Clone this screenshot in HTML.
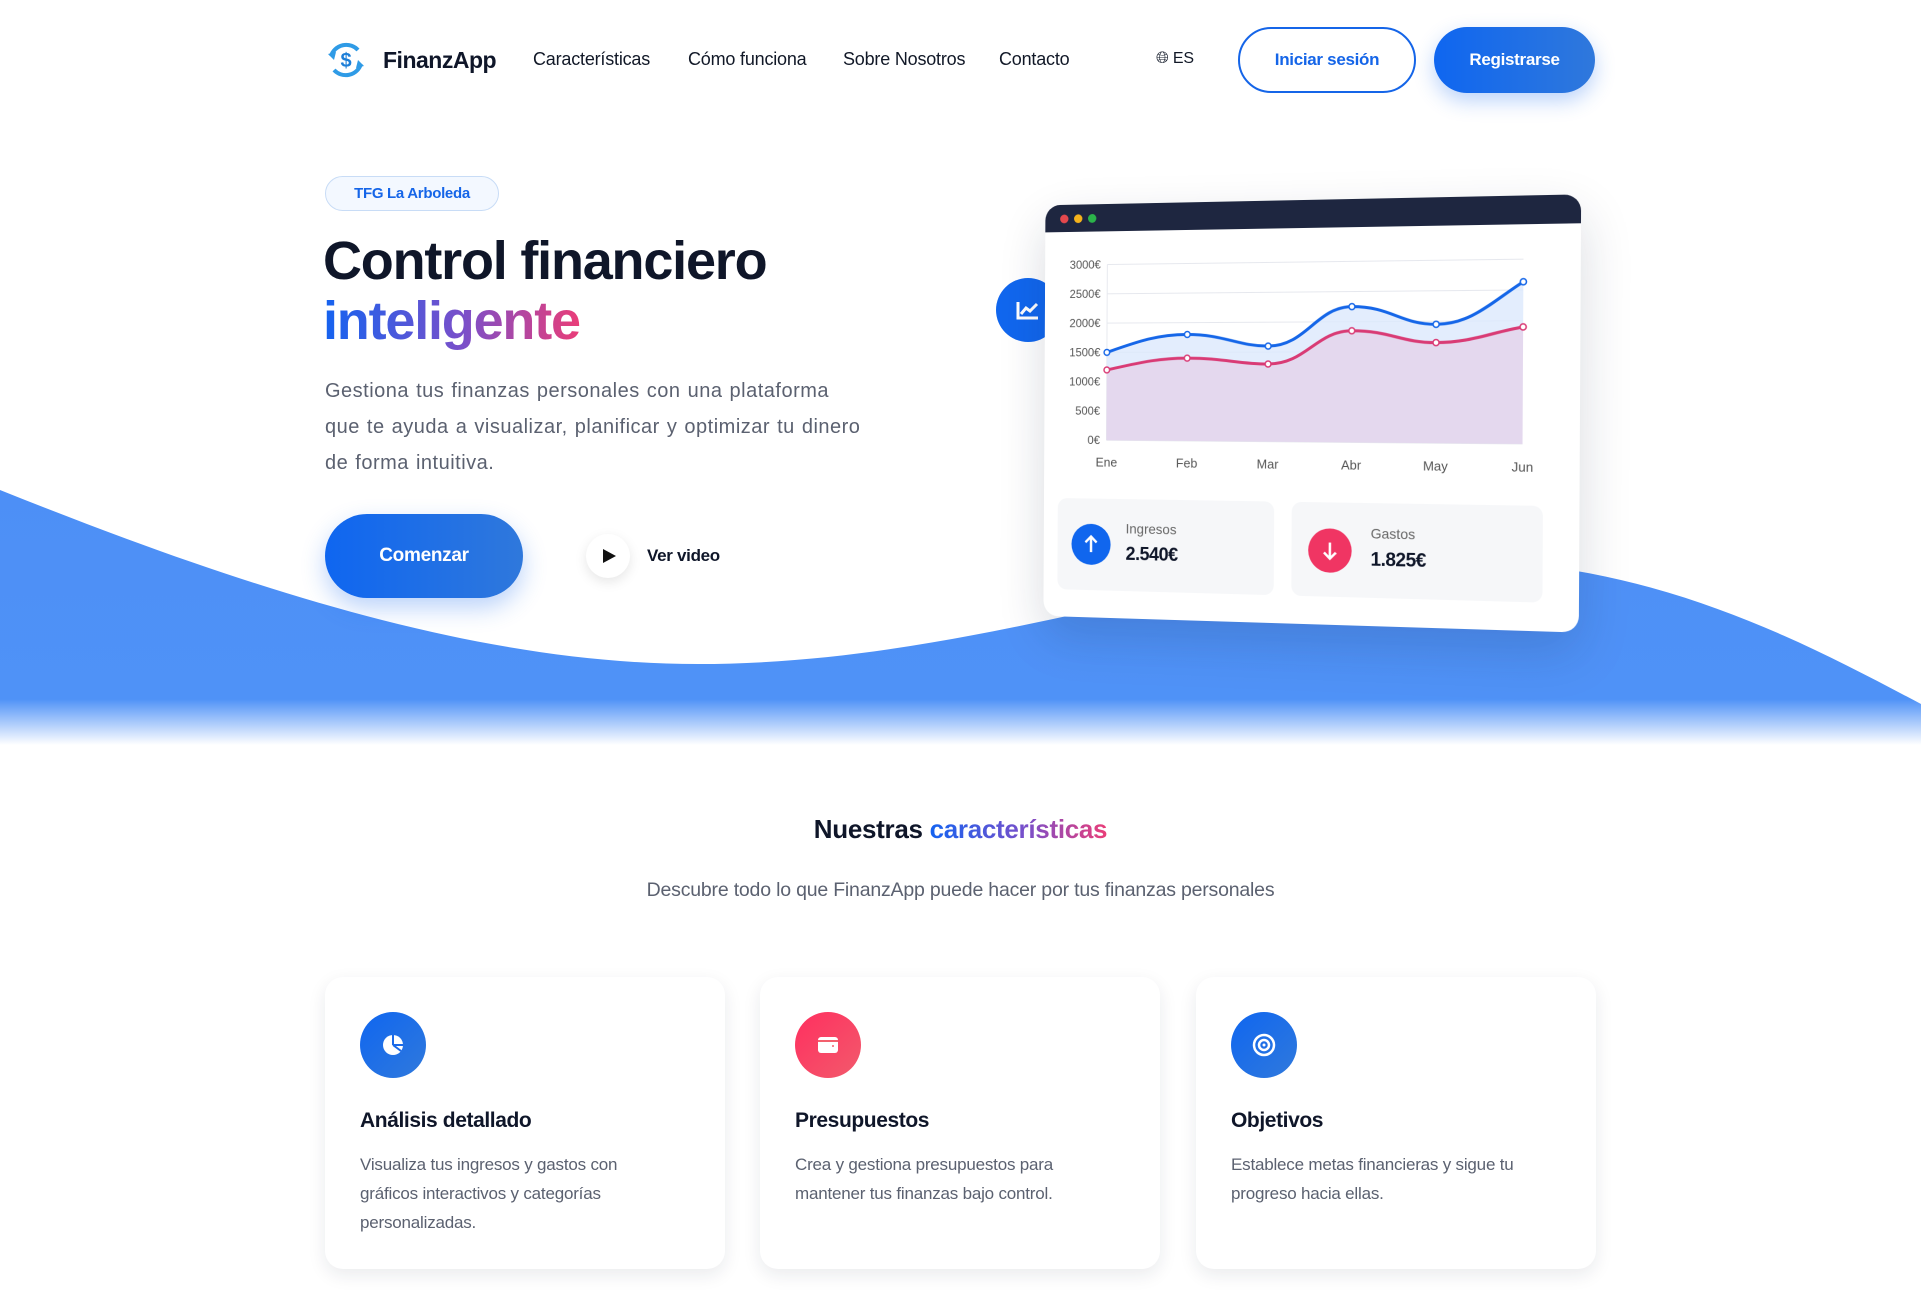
<!DOCTYPE html>
<html><head><meta charset="utf-8"><style>
*{margin:0;padding:0;box-sizing:border-box}
body{width:1921px;height:1294px;overflow:hidden;background:#fff;font-family:"Liberation Sans",sans-serif;color:#0f1629;position:relative}
.abs{position:absolute}
.nav a{position:absolute;top:49px;font-size:18px;color:#111827;text-decoration:none;letter-spacing:-0.2px}
.btn{position:absolute;border-radius:34px;display:flex;align-items:center;justify-content:center;font-weight:bold;font-size:17px;letter-spacing:-0.3px}
.grad{background:linear-gradient(90deg,#1463f0,#7b4fc9 55%,#ea3d78);-webkit-background-clip:text;background-clip:text;color:transparent}
.card{position:absolute;top:977px;width:400px;height:292px;background:#fff;border-radius:18px;box-shadow:0 6px 18px rgba(20,30,60,.09)}
.card .ic{position:absolute;left:35px;top:35px;width:66px;height:66px;border-radius:50%;display:flex;align-items:center;justify-content:center}
.card h3{position:absolute;left:35px;top:132px;font-size:21px;letter-spacing:-0.4px}
.card p{position:absolute;left:35px;top:173px;width:340px;font-size:17px;line-height:29px;color:#5b6170;letter-spacing:-0.2px;white-space:nowrap}
</style></head><body>

<svg class="abs" style="left:0;top:0" width="1921" height="760">
<defs><linearGradient id="wf" x1="0" y1="0" x2="0" y2="1"><stop offset="0" stop-color="#4d8ff6"/><stop offset="0.82" stop-color="#4f92f7"/><stop offset="1" stop-color="#fff"/></linearGradient></defs>
<path d="M0 490 C250 590 480 664 698 664 C980 664 1200 560 1450 560 C1650 560 1800 640 1921 704 L1921 745 L0 745 Z" fill="url(#wf)"/>
</svg>

<svg class="abs" style="left:326px;top:40px" width="40" height="40" viewBox="0 0 40 40">
<path d="M32 10 A16 16 0 0 0 5 16" fill="none" stroke="#2f9be6" stroke-width="4"/>
<path d="M8 30 A16 16 0 0 0 35 24" fill="none" stroke="#2f9be6" stroke-width="4"/>
<path d="M2 14 L8 20 L10 12Z" fill="#2f9be6"/><path d="M38 26 L32 20 L30 28Z" fill="#2f9be6"/>
<text x="20" y="27" text-anchor="middle" font-family="Liberation Sans" font-weight="bold" font-size="20" fill="#1d7fd8">$</text>
</svg>
<div class="abs" style="left:383px;top:47px;font-size:23px;font-weight:bold;letter-spacing:-0.5px">FinanzApp</div>
<div class="nav">
<a style="left:533px">Características</a>
<a style="left:688px">Cómo funciona</a>
<a style="left:843px">Sobre Nosotros</a>
<a style="left:999px">Contacto</a>
<a style="left:1156px;font-size:16px;top:50px">🌐︎ ES</a>
</div>
<div class="btn" style="left:1238px;top:27px;width:178px;height:66px;border:2px solid #1565e8;color:#1565e8">Iniciar sesión</div>
<div class="btn" style="left:1434px;top:27px;width:161px;height:66px;background:linear-gradient(90deg,#0f66f0,#2f78dc);color:#fff;box-shadow:0 8px 20px rgba(30,110,240,.3)">Registrarse</div>

<div class="abs" style="left:325px;top:176px;width:174px;height:35px;border:1px solid #c8dcf6;background:#f3f8ff;border-radius:18px;color:#1565e8;font-size:15px;font-weight:bold;display:flex;align-items:center;justify-content:center;letter-spacing:-0.3px">TFG La Arboleda</div>
<div class="abs" style="left:323px;top:231px;font-size:54px;font-weight:bold;letter-spacing:-1.2px;line-height:60px">Control financiero<br><span class="grad">inteligente</span></div>
<div class="abs" style="left:325px;top:373px;width:620px;font-size:20px;line-height:36px;color:#5b6170;letter-spacing:0.5px;word-spacing:1px;white-space:nowrap">Gestiona tus finanzas personales con una plataforma<br>que te ayuda a visualizar, planificar y optimizar tu dinero<br>de forma intuitiva.</div>
<div class="btn" style="left:325px;top:514px;width:198px;height:84px;border-radius:42px;background:linear-gradient(90deg,#0f66f0,#2f78dc);color:#fff;font-size:19px;box-shadow:0 10px 24px rgba(30,110,240,.3)">Comenzar</div>
<div class="abs" style="left:586px;top:534px;width:44px;height:44px;border-radius:50%;background:#fff;box-shadow:0 4px 12px rgba(0,0,0,.1)"><svg width="44" height="44"><path d="M17 15 L30 22 L17 29Z" fill="#111"/></svg></div>
<div class="abs" style="left:647px;top:546px;font-size:17px;font-weight:bold;letter-spacing:-0.3px">Ver video</div>

<div class="abs" style="left:996px;top:278px;width:64px;height:64px;border-radius:50%;background:#1066ee"><svg width="64" height="64"><path d="M22 24 V40 H42" fill="none" stroke="#fff" stroke-width="3"/><path d="M25 36 L30 30 L34 33 L41 26" fill="none" stroke="#fff" stroke-width="3"/></svg></div>

<div class="abs" style="left:1031px;top:200px;width:545px;height:424px;transform:perspective(1600px) rotateY(-11deg) rotateZ(0.3deg);transform-origin:50% 50%">
<div style="position:absolute;inset:0;background:#fff;border-radius:16px;box-shadow:0 20px 50px rgba(20,30,60,.16);overflow:hidden">
<div style="height:28px;background:#1e2640;display:flex;align-items:center;padding-left:16px;gap:6px">
<i style="width:9px;height:9px;border-radius:50%;background:#e5484d"></i><i style="width:9px;height:9px;border-radius:50%;background:#f5b31c"></i><i style="width:9px;height:9px;border-radius:50%;background:#2bb34a"></i></div>
<svg style="position:absolute;left:0;top:34px" width="545" height="260" font-family="Liberation Sans" font-size="12" fill="#555">
<g stroke="#e6e8ee" stroke-width="1">
<line x1="67" y1="28" x2="490" y2="28"/><line x1="67" y1="58" x2="490" y2="58"/><line x1="67" y1="88" x2="490" y2="88"/><line x1="67" y1="118" x2="490" y2="118"/><line x1="67" y1="148" x2="490" y2="148"/><line x1="67" y1="178" x2="490" y2="178"/><line x1="67" y1="208" x2="490" y2="208"/><line x1="67" y1="28" x2="67" y2="208"/></g>
<g text-anchor="end"><text x="60" y="32">3000€</text><text x="60" y="62">2500€</text><text x="60" y="92">2000€</text><text x="60" y="122">1500€</text><text x="60" y="152">1000€</text><text x="60" y="182">500€</text><text x="60" y="212">0€</text></g>
<g text-anchor="middle" font-size="13"><text x="67" y="235">Ene</text><text x="152" y="235">Feb</text><text x="236" y="235">Mar</text><text x="321" y="235">Abr</text><text x="405" y="235">May</text><text x="490" y="235">Jun</text></g>
<path d="M67 118 C100 107 120 100 152 100 C190 100 205 112 236 112 C275 112 285 73 321 73 C360 73 370 91 405 91 C440 91 460 69 490 50 L490 208 L67 208Z" fill="#dce9fc" opacity=".8"/>
<path d="M67 136 C100 129 120 124 152 124 C190 124 205 130 236 130 C275 130 285 97 321 97 C360 97 370 109 405 109 C440 109 460 99 490 94 L490 208 L67 208Z" fill="#e4d8ee"/>
<path d="M67 118 C100 107 120 100 152 100 C190 100 205 112 236 112 C275 112 285 73 321 73 C360 73 370 91 405 91 C440 91 460 69 490 50" fill="none" stroke="#1566e8" stroke-width="3"/>
<path d="M67 136 C100 129 120 124 152 124 C190 124 205 130 236 130 C275 130 285 97 321 97 C360 97 370 109 405 109 C440 109 460 99 490 94" fill="none" stroke="#d93b75" stroke-width="3"/>
<g fill="#fff" stroke="#1566e8" stroke-width="1.5"><circle cx="67" cy="118" r="3"/><circle cx="152" cy="100" r="3"/><circle cx="236" cy="112" r="3"/><circle cx="321" cy="73" r="3"/><circle cx="405" cy="91" r="3"/><circle cx="490" cy="50" r="3"/></g>
<g fill="#fff" stroke="#d93b75" stroke-width="1.5"><circle cx="67" cy="136" r="3"/><circle cx="152" cy="124" r="3"/><circle cx="236" cy="130" r="3"/><circle cx="321" cy="97" r="3"/><circle cx="405" cy="109" r="3"/><circle cx="490" cy="94" r="3"/></g>
</svg>
<div style="position:absolute;left:15px;top:302px;width:228px;height:94px;background:#f6f7f9;border-radius:10px">
<div style="position:absolute;left:15px;top:26px;width:42px;height:42px;border-radius:50%;background:#1066ee"><svg width="42" height="42"><path d="M21 29 V13 M15 19 L21 13 L27 19" stroke="#fff" stroke-width="2.5" fill="none"/></svg></div>
<div style="position:absolute;left:73px;top:22px;font-size:14px;color:#666">Ingresos</div>
<div style="position:absolute;left:73px;top:46px;font-size:19px;font-weight:bold;letter-spacing:-0.5px">2.540€</div></div>
<div style="position:absolute;left:261px;top:302px;width:249px;height:94px;background:#f6f7f9;border-radius:10px">
<div style="position:absolute;left:17px;top:26px;width:44px;height:44px;border-radius:50%;background:#f03563"><svg width="44" height="44"><path d="M22 14 V30 M16 24 L22 30 L28 24" stroke="#fff" stroke-width="2.5" fill="none"/></svg></div>
<div style="position:absolute;left:80px;top:22px;font-size:14px;color:#666">Gastos</div>
<div style="position:absolute;left:80px;top:46px;font-size:19px;font-weight:bold;letter-spacing:-0.5px">1.825€</div></div>
</div></div>

<div class="abs" style="left:0;width:1921px;top:814px;text-align:center;font-size:26px;font-weight:bold;letter-spacing:-0.3px">Nuestras <span class="grad">características</span></div>
<div class="abs" style="left:0;width:1921px;top:879px;text-align:center;font-size:19.5px;color:#5b6170;letter-spacing:-0.2px">Descubre todo lo que FinanzApp puede hacer por tus finanzas personales</div>

<div class="card" style="left:325px"><div class="ic" style="background:linear-gradient(135deg,#0f66f0,#3079dc)"><svg width="24" height="24"><circle cx="12" cy="12" r="10" fill="#fff"/><path d="M12 12 V2 M12 12 L20 18 M12 12 H22" stroke="#1a6ae9" stroke-width="2"/></svg></div><h3>Análisis detallado</h3><p>Visualiza tus ingresos y gastos con<br>gráficos interactivos y categorías<br>personalizadas.</p></div>
<div class="card" style="left:760px"><div class="ic" style="background:linear-gradient(135deg,#ff2f5f,#f25a6c)"><svg width="24" height="24"><rect x="2" y="4" width="20" height="16" rx="3" fill="#fff"/><rect x="2" y="7" width="20" height="2" fill="#f3606d"/><circle cx="17" cy="13" r="1" fill="#f3606d"/></svg></div><h3>Presupuestos</h3><p>Crea y gestiona presupuestos para<br>mantener tus finanzas bajo control.</p></div>
<div class="card" style="left:1196px"><div class="ic" style="background:linear-gradient(135deg,#0f66f0,#3079dc)"><svg width="26" height="26"><circle cx="13" cy="13" r="10" fill="none" stroke="#fff" stroke-width="2.5"/><circle cx="13" cy="13" r="5" fill="none" stroke="#fff" stroke-width="2.5"/><circle cx="13" cy="13" r="1.5" fill="#fff"/></svg></div><h3>Objetivos</h3><p>Establece metas financieras y sigue tu<br>progreso hacia ellas.</p></div>
</body></html>
